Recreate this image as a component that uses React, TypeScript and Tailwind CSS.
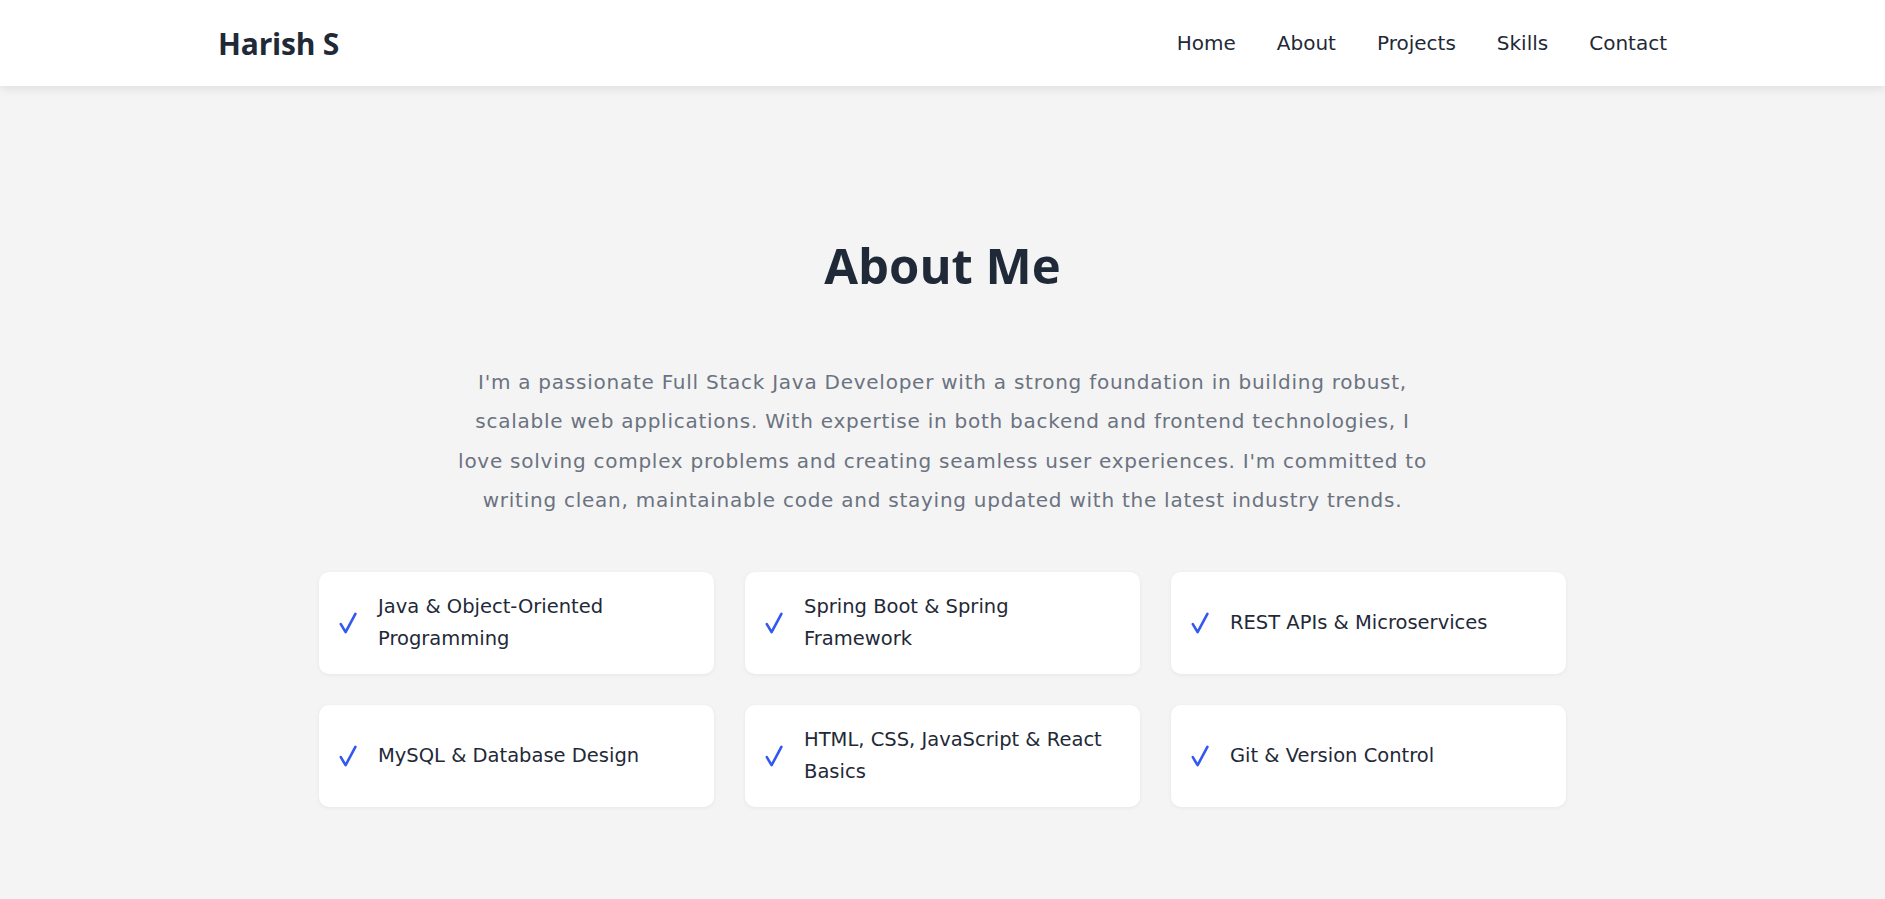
const skills = [
  "Java & Object-Oriented Programming",
  "Spring Boot & Spring Framework",
  "REST APIs & Microservices",
  "MySQL & Database Design",
  "HTML, CSS, JavaScript & React Basics",
  "Git & Version Control",
];

const links = ["Home", "About", "Projects", "Skills", "Contact"];

function Check() {
  return (
    <svg width="18" height="22" viewBox="0 0 18 22" fill="none" className="shrink-0">
      <path d="M1.8 12.2 L6.6 20.2 L16.4 1.8" stroke="#3358f0" strokeWidth="2.6" strokeLinecap="round" strokeLinejoin="round" />
    </svg>
  );
}

export default function App() {
  return (
    <div className="min-h-screen bg-[#f4f4f4] font-['DejaVu_Sans',sans-serif] text-[#1f2937]">
      {/* Header */}
      <header className="bg-white shadow-[0_2px_10px_rgba(0,0,0,0.1)]">
        <div className="mx-auto flex h-[86px] max-w-[1449px] items-center justify-between">
          <span className="font-['Open_Sans',sans-serif] text-[30px] font-bold tracking-[-0.2px]">Harish S</span>
          <nav className="flex gap-[41px] text-[20px]">
            {links.map((l) => (
              <a key={l} href={"#" + l.toLowerCase()} className="hover:text-[#2563eb]">
                {l}
              </a>
            ))}
          </nav>
        </div>
      </header>

      {/* About */}
      <section className="pt-[150px] pb-[90px]">
        <h2 className="text-center font-['Open_Sans',sans-serif] text-[49px] font-bold leading-[1.2]">About Me</h2>
        <p className="mx-auto mt-[68px] max-w-[978px] text-center text-[20px] leading-[39.4px] tracking-[0.75px] text-[#6b7280]">
          I'm a passionate Full Stack Java Developer with a strong foundation in building robust,
          scalable web applications. With expertise in both backend and frontend technologies, I
          love solving complex problems and creating seamless user experiences. I'm committed to
          writing clean, maintainable code and staying updated with the latest industry trends.
        </p>

        <div className="mx-auto mt-[52px] grid max-w-[1247px] grid-cols-3 gap-[31px]">
          {skills.map((s) => (
            <div
              key={s}
              className="flex h-[102px] items-center gap-[21px] rounded-[10px] bg-white pl-[20px] pr-[30px] shadow-[0_1px_4px_rgba(0,0,0,0.06)]"
            >
              <Check />
              <span className="text-[19.5px] leading-[32px] text-[#1f2937]">{s}</span>
            </div>
          ))}
        </div>
      </section>
    </div>
  );
}
